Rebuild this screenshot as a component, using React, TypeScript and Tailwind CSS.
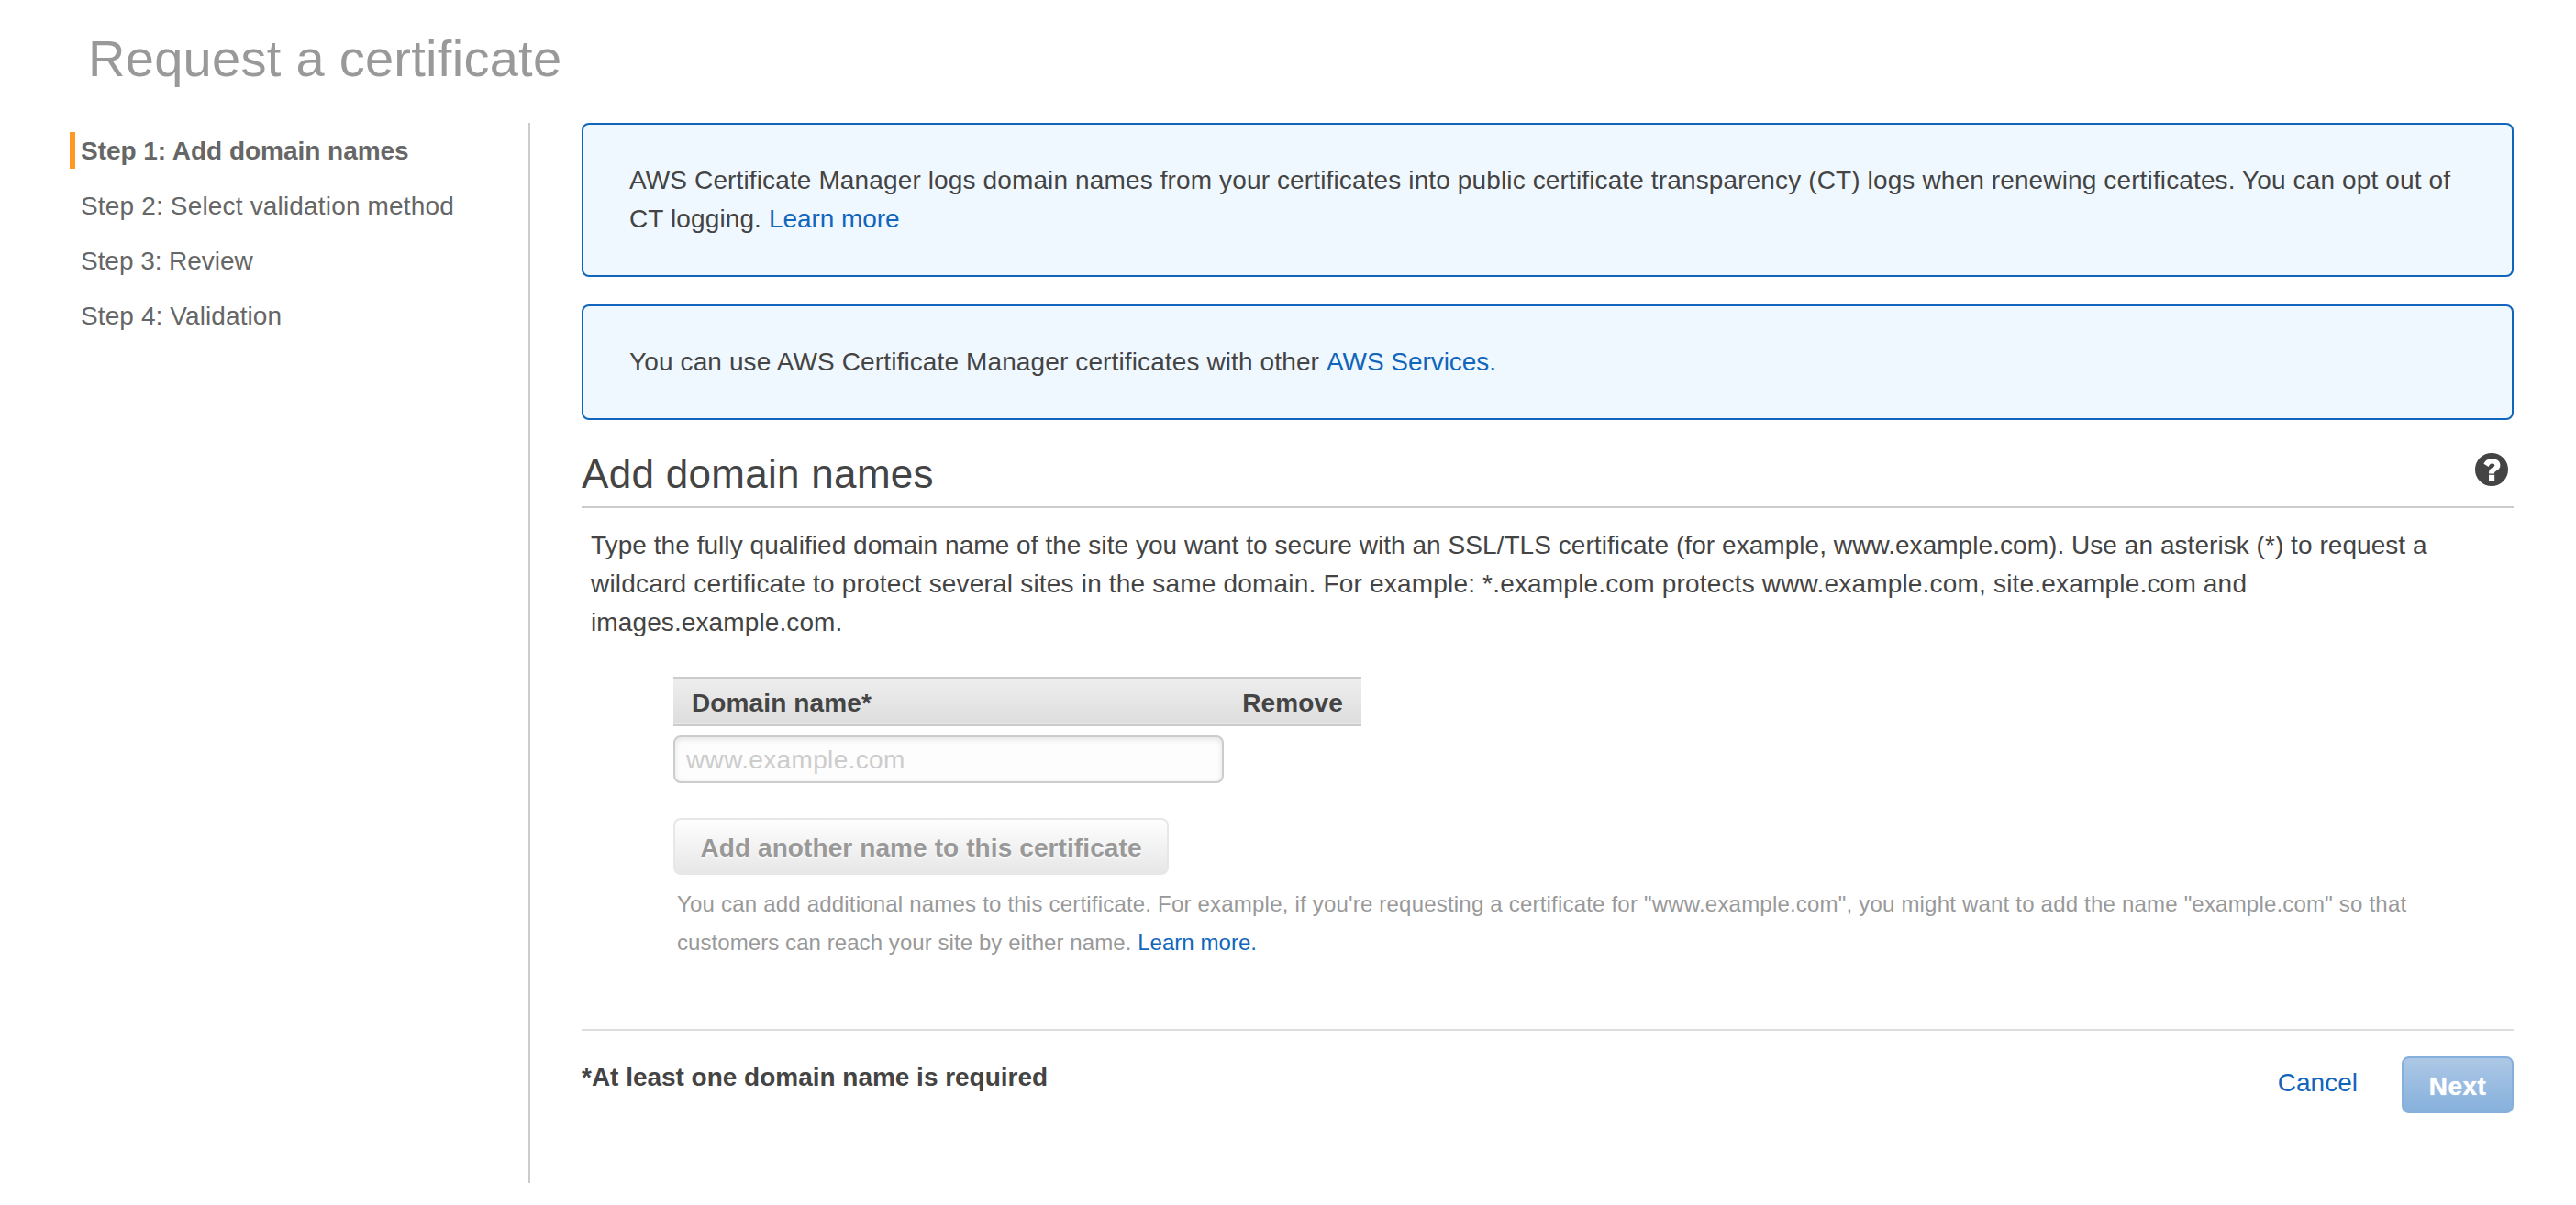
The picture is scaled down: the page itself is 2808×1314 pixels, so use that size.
import { useState } from "react";

const steps = [
  { label: "Step 1: Add domain names", active: true, tracking: "tracking-[-0.03px]" },
  { label: "Step 2: Select validation method", active: false, tracking: "tracking-[0.17px]" },
  { label: "Step 3: Review", active: false, tracking: "tracking-[-0.05px]" },
  { label: "Step 4: Validation", active: false, tracking: "tracking-[0.1px]" },
];

function HelpIcon() {
  return (
    <svg width="36" height="36" viewBox="0 0 36 36">
      <circle cx="18" cy="18" r="18" fill="#444" />
      <path
        d="M9.4 11.8C11 8.2 14 6 18.3 6C23.6 6 27.4 9 27.4 13.3C27.4 16.8 25 18.3 23 19.6C21.5 20.6 21 21.2 21 22.4H15C15 19 16 17.5 18.5 16C20.3 15 21.3 14.5 21.3 13.4C21.3 12.2 20 11.5 18.5 11.5C16.6 11.5 15.5 12.8 14.7 15Z"
        fill="#fff"
      />
      <rect x="15" y="23.8" width="6.2" height="6.4" fill="#fff" />
    </svg>
  );
}

export default function App() {
  const [domain, setDomain] = useState("");

  return (
    <div className="min-h-screen bg-white font-['Liberation_Sans',Arial,sans-serif] text-[28px] leading-[42px] text-[#444]">
      <h1 className="h-[134px] pl-24 pt-8 text-[56px] leading-[64px] tracking-[0.28px] text-[#999]">
        Request a certificate
      </h1>

      <div className="flex">
        {/* Wizard steps */}
        <nav className="flex h-[1156px] w-[578px] flex-col gap-5 border-r-2 border-[#ccc] pl-[76px] pt-2.5 text-[#666]">
          {steps.map((step) => (
            <div
              key={step.label}
              className={
                step.active
                  ? "h-10 border-l-6 border-[#ff9922] pl-1.5 leading-[42px] font-bold"
                  : "h-10 border-l-6 border-transparent pl-1.5 leading-[42px]"
              }
            >
              <span className={step.tracking}>{step.label}</span>
            </div>
          ))}
        </nav>

        <main className="ml-14 w-[2106px]">
          {/* Notices */}
          <div className="rounded-lg border-2 border-[#1166bb] bg-[#f0f8ff] px-[50px] py-10 whitespace-nowrap">
            <p className="tracking-[0.13px]">
              AWS Certificate Manager logs domain names from your certificates into public certificate transparency (CT) logs when renewing certificates. You can opt out of
            </p>
            <p className="tracking-[0.12px]">
              CT logging. <a className="tracking-[-0.05px] text-[#1166bb]">Learn more</a>
            </p>
          </div>
          <div className="mt-[30px] rounded-lg border-2 border-[#1166bb] bg-[#f0f8ff] px-[50px] py-10">
            <p className="tracking-[0.12px]">
              You can use AWS Certificate Manager certificates with other{" "}
              <a className="tracking-[-0.05px] text-[#1166bb]">AWS Services.</a>
            </p>
          </div>

          <div className="mt-8 flex h-16 items-start justify-between border-b-2 border-[#ccc] pr-1.5">
            <h2 className="text-[44px] leading-[54px] tracking-[0.3px]">Add domain names</h2>
            <div className="pt-1">
              <HelpIcon />
            </div>
          </div>

          <div className="mt-5 pl-2.5 whitespace-nowrap">
            <p className="tracking-[0.05px]">
              Type the fully qualified domain name of the site you want to secure with an SSL/TLS certificate (for example, www.example.com). Use an asterisk (*) to request a
            </p>
            <p className="tracking-[0.19px]">
              wildcard certificate to protect several sites in the same domain. For example: *.example.com protects www.example.com, site.example.com and
            </p>
            <p className="tracking-[0.11px]">images.example.com.</p>
          </div>

          {/* Domain form */}
          <div className="mt-[38px] flex flex-col items-start pl-[100px]">
            <div className="flex h-[54px] w-[750px] justify-between border-y-2 border-[#ccc] bg-linear-to-b from-[#eee] to-[#ddd] pt-1.5 pr-5 pl-5 font-bold shadow-[inset_0_-2px_0_#e8e8e8]">
              <span className="tracking-[0.12px]">Domain name*</span>
              <span className="tracking-[0.15px]">Remove</span>
            </div>
            <input
              type="text"
              placeholder="www.example.com"
              value={domain}
              onChange={(e) => setDomain(e.target.value)}
              className="mt-2.5 h-[52px] w-[600px] rounded-lg border-2 border-[#ccc] bg-[#fdfdfd] px-3 pt-0.5 tracking-[0.35px] shadow-[inset_0_2px_6px_#e2e2e2] placeholder:text-[#ccc] focus:outline-none"
            />
            <button
              disabled
              className="mt-[38px] h-[62px] w-[540px] rounded-lg border-2 border-[#e7e7e7] bg-linear-to-b from-[#fefefe] to-[#e7e7e7] pt-[3px] font-bold tracking-[0.1px] text-[#999] text-shadow-[0_2px_2px_#fff]"
            >
              Add another name to this certificate
            </button>
            <div className="mt-[11px] pl-1 text-2xl leading-[42px] whitespace-nowrap text-[#999]">
              <p className="tracking-[0.2px]">
                You can add additional names to this certificate. For example, if you're requesting a certificate for "www.example.com", you might want to add the name "example.com" so that
              </p>
              <p className="tracking-[0.07px]">
                customers can reach your site by either name. <a className="tracking-[0.05px] text-[#1166bb]">Learn more.</a>
              </p>
            </div>
          </div>

          {/* Footer */}
          <div className="mt-[73px] flex items-start border-t-2 border-[#ddd] pt-7">
            <p className="mt-0.5 font-bold tracking-[-0.02px]">*At least one domain name is required</p>
            <a className="mt-2 mr-[48px] ml-auto text-[#1166bb]">Cancel</a>
            <button
              disabled
              className="h-[62px] w-[122px] rounded-lg border-2 border-[#86b0dc] bg-linear-to-b from-[#adc8e6] to-[#86b0dc] pt-[3px] font-bold tracking-[0.4px] text-white text-shadow-[0_0_1px_#fff]"
            >
              Next
            </button>
          </div>
        </main>
      </div>
    </div>
  );
}
